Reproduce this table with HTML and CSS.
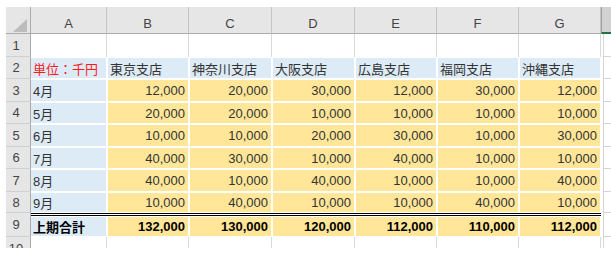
FILE: index.html
```html
<!DOCTYPE html>
<html lang="ja">
<head>
<meta charset="utf-8">
<link rel="stylesheet" href="styles.css">
</head>
<body>
<div class="sheet">
  <div class="corner"><svg class="tri" width="25" height="27" viewBox="0 0 25 27"><polygon points="7,25 21,25 21,12" fill="#BDBDBD"/></svg></div>
  <div class="ch">A</div><div class="ch">B</div><div class="ch">C</div><div class="ch">D</div><div class="ch">E</div><div class="ch">F</div><div class="ch">G</div><div class="ch ch-sel"></div>

  <div class="rh">1</div>
  <div class="e"></div><div class="e"></div><div class="e"></div><div class="e"></div><div class="e"></div><div class="e"></div><div class="e"></div><div class="x"></div>

  <div class="rh">2</div>
  <div class="c b a red">単位：千円</div><div class="c b">東京支店</div><div class="c b">神奈川支店</div><div class="c b">大阪支店</div><div class="c b">広島支店</div><div class="c b">福岡支店</div><div class="c b">沖縄支店</div><div class="x"></div>

  <div class="rh">3</div>
  <div class="c b a">4月</div><div class="c y n">12,000</div><div class="c y n">20,000</div><div class="c y n">30,000</div><div class="c y n">12,000</div><div class="c y n">30,000</div><div class="c y n">12,000</div><div class="x"></div>

  <div class="rh">4</div>
  <div class="c b a">5月</div><div class="c y n">20,000</div><div class="c y n">20,000</div><div class="c y n">10,000</div><div class="c y n">10,000</div><div class="c y n">10,000</div><div class="c y n">10,000</div><div class="x"></div>

  <div class="rh">5</div>
  <div class="c b a">6月</div><div class="c y n">10,000</div><div class="c y n">10,000</div><div class="c y n">20,000</div><div class="c y n">30,000</div><div class="c y n">10,000</div><div class="c y n">30,000</div><div class="x"></div>

  <div class="rh">6</div>
  <div class="c b a">7月</div><div class="c y n">40,000</div><div class="c y n">30,000</div><div class="c y n">10,000</div><div class="c y n">40,000</div><div class="c y n">10,000</div><div class="c y n">10,000</div><div class="x"></div>

  <div class="rh">7</div>
  <div class="c b a">8月</div><div class="c y n">40,000</div><div class="c y n">10,000</div><div class="c y n">40,000</div><div class="c y n">10,000</div><div class="c y n">10,000</div><div class="c y n">40,000</div><div class="x"></div>

  <div class="rh">8</div>
  <div class="c b a">9月</div><div class="c y n">10,000</div><div class="c y n">40,000</div><div class="c y n">10,000</div><div class="c y n">10,000</div><div class="c y n">40,000</div><div class="c y n">10,000</div><div class="x"></div>

  <div class="rh rh9">9</div>
  <div class="dbl"></div><div class="x xl"></div>
  <div class="c b a bold">上期合計</div><div class="c y n bold">132,000</div><div class="c y n bold">130,000</div><div class="c y n bold">120,000</div><div class="c y n bold">112,000</div><div class="c y n bold">110,000</div><div class="c y n bold">112,000</div><div class="x"></div>

  <div class="rh">10</div>
  <div class="e"></div><div class="e"></div><div class="e"></div><div class="e"></div><div class="e"></div><div class="e"></div><div class="e"></div><div class="x"></div>
</div>
</body>
</html>
```

FILE: styles.css
```css
html, body {
  margin: 0;
  padding: 0;
  background: #ffffff;
}
body {
  padding: 7px 0 0 6px;
  font-family: "Liberation Sans", "Noto Sans CJK JP", sans-serif;
  font-size: 13px;
  color: #333333;
}
.sheet {
  display: grid;
  grid-template-columns: 25px 76px 82px 83px 83px 82px 82px 82px 10px;
  grid-template-rows: 27px 23px 22px 23px 22px 23px 22px 23px 21px 3px 21px 23px;
  height: 241px;
  overflow: hidden;
  background: #ffffff;
}
.corner {
  background: #e6e6e6;
  border-right: 1px solid #ababab;
  border-bottom: 1px solid #ababab;
  box-sizing: border-box;
  position: relative;
}
.tri {
  position: absolute;
  left: 0;
  top: 0;
}
.ch {
  background: #e6e6e6;
  border-right: 1px solid #c4c4c4;
  border-bottom: 1px solid #ababab;
  box-sizing: border-box;
  display: flex;
  align-items: center;
  justify-content: center;
  padding-top: 6px;
  color: #444444;
  font-size: 13px;
}
.ch-sel {
  background: #d2d2d2;
  border-right: none;
  border-left: 1px solid #9e9e9e;
  border-bottom: 2px solid #217346;
}
.rh {
  background: #e6e6e6;
  border-right: 1px solid #ababab;
  border-bottom: 1px solid #d0d0d0;
  box-sizing: border-box;
  display: flex;
  align-items: center;
  justify-content: center;
  padding-right: 4px;
  color: #444444;
  font-size: 13px;
}
.rh9 {
  grid-row: span 2;
}
.e {
  border-right: 1px solid #d9d9d9;
  box-sizing: border-box;
}
.x {
  border-left: 1px solid #d4d4d4;
  border-bottom: 1px solid #d4d4d4;
  box-sizing: border-box;
  margin-left: 2px;
}
.xl {
  border-bottom: none;
}
.c {
  margin: 1px;
  display: flex;
  align-items: center;
  padding: 0 2px;
  white-space: nowrap;
  overflow: hidden;
}
.a {
  margin-left: 0;
}
.b {
  background: #ddebf7;
}
.y {
  background: #ffe699;
}
.n {
  justify-content: flex-end;
  padding-right: 3px;
}
.red {
  color: #ff1a1a;
}
.bold {
  font-weight: bold;
  color: #000000;
}
.dbl {
  grid-column: span 7;
  border-top: 1px solid #000000;
  border-bottom: 1px solid #000000;
  background: #ffffff;
  box-sizing: border-box;
}
```
